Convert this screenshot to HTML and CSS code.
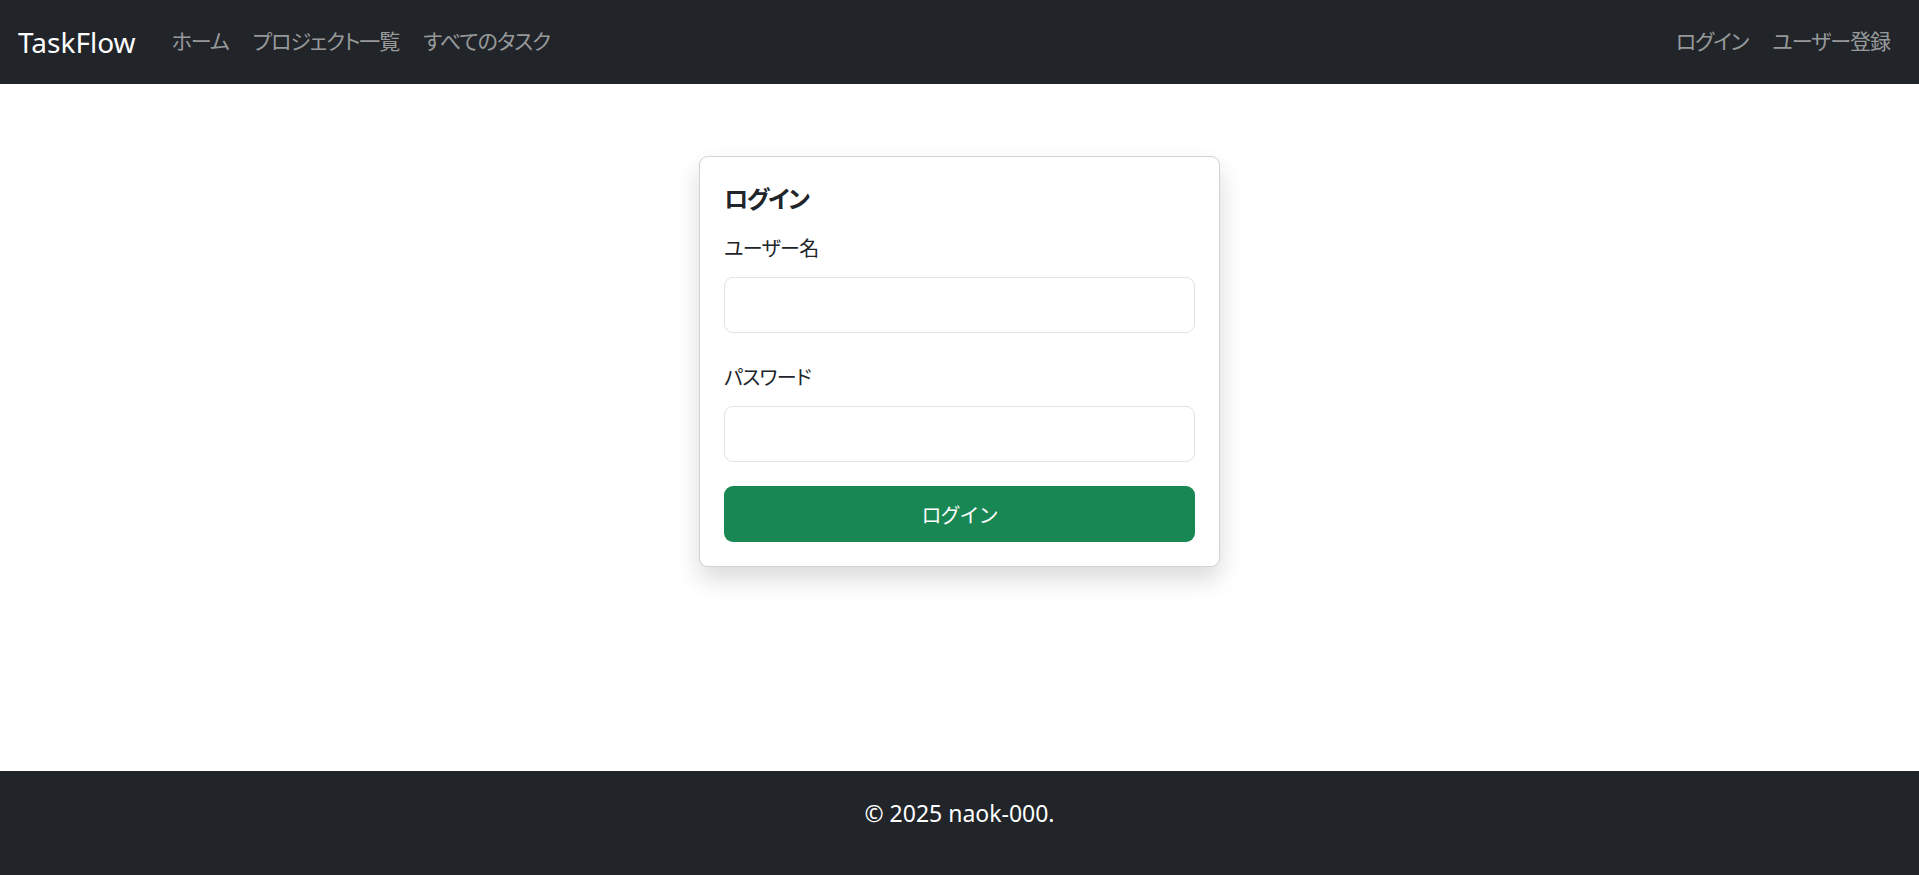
FILE: index.html
```html
<!DOCTYPE html>
<html lang="ja">
<head>
<meta charset="utf-8">
<title>TaskFlow - ログイン</title>
<link rel="stylesheet" href="styles.css">
</head>
<body>
<header class="navbar">
  <div class="nav-left">
    <a class="brand" href="#">TaskFlow</a>
    <nav class="nav-links">
      <a href="#">ホーム</a>
      <a href="#">プロジェクト一覧</a>
      <a href="#">すべてのタスク</a>
    </nav>
  </div>
  <nav class="nav-links">
    <a href="#">ログイン</a>
    <a href="#">ユーザー登録</a>
  </nav>
</header>
<main class="main">
  <div class="card">
    <h2 class="card-title">ログイン</h2>
    <form class="form">
      <div class="field">
        <label class="label" for="u">ユーザー名</label>
        <input class="input" id="u" type="text">
      </div>
      <div class="field">
        <label class="label" for="p">パスワード</label>
        <input class="input" id="p" type="password">
      </div>
      <button class="btn" type="button">ログイン</button>
    </form>
  </div>
</main>
<footer class="footer">
  <p>© 2025 naok-000.</p>
</footer>
</body>
</html>
```
FILE: styles.css
```css
* { box-sizing: border-box; }
html, body { margin: 0; padding: 0; }
body {
  height: 100vh;
  display: flex;
  flex-direction: column;
  font-family: "Noto Sans", "Noto Sans CJK JP", sans-serif;
  font-size: 24px;
  line-height: 1.5;
  color: #212529;
  background: #fff;
  font-feature-settings: "palt";
}
a { text-decoration: none; }

.navbar {
  height: 84px;
  flex: none;
  background: #212529;
  display: flex;
  align-items: center;
  justify-content: space-between;
  padding: 0 17px 0 18px;
}
.nav-left { display: flex; align-items: center; }
.brand {
  color: #fff;
  font-size: 28px;
  margin-right: 24px;
  padding: 6px 0;
}
.nav-links { display: flex; align-items: center; }
.nav-links a {
  color: rgba(255,255,255,.55);
  font-size: 21px;
  letter-spacing: -1px;
  padding: 12px 12px;
}

.main {
  flex: 1;
  display: flex;
  justify-content: center;
  align-items: flex-start;
  padding-top: 72px;
}
.card {
  width: 521px;
  background: #fff;
  border: 1px solid rgba(0,0,0,.175);
  border-radius: 9px;
  box-shadow: 0 12px 24px rgba(0,0,0,.15);
  padding: 24px;
}
.card-title {
  margin: 0 0 14px;
  font-size: 24px;
  letter-spacing: -1.5px;
  font-weight: 700;
  line-height: 36px;
}
.form { display: flex; flex-direction: column; }
.field { display: flex; flex-direction: column; margin-bottom: 27px; }
.field + .field { margin-bottom: 24px; }
.label {
  font-size: 20px;
  letter-spacing: -0.6px;
  line-height: 36px;
  margin-bottom: 10px;
}
.input {
  height: 56px;
  border: 1px solid #dee2e6;
  border-radius: 9px;
  background: #fff;
  font: inherit;
  padding: 0 18px;
}
.btn {
  height: 56px;
  border: 0;
  border-radius: 9px;
  background: #198754;
  color: #fff;
  font-family: inherit;
  font-size: 20px;
  letter-spacing: -1px;
  cursor: pointer;
}

.footer {
  flex: none;
  height: 104px;
  background: #212529;
  color: #fff;
  text-align: center;
  padding-top: 24px;
}
.footer p { margin: 0; font-size: 23px; line-height: 36px; }
```
